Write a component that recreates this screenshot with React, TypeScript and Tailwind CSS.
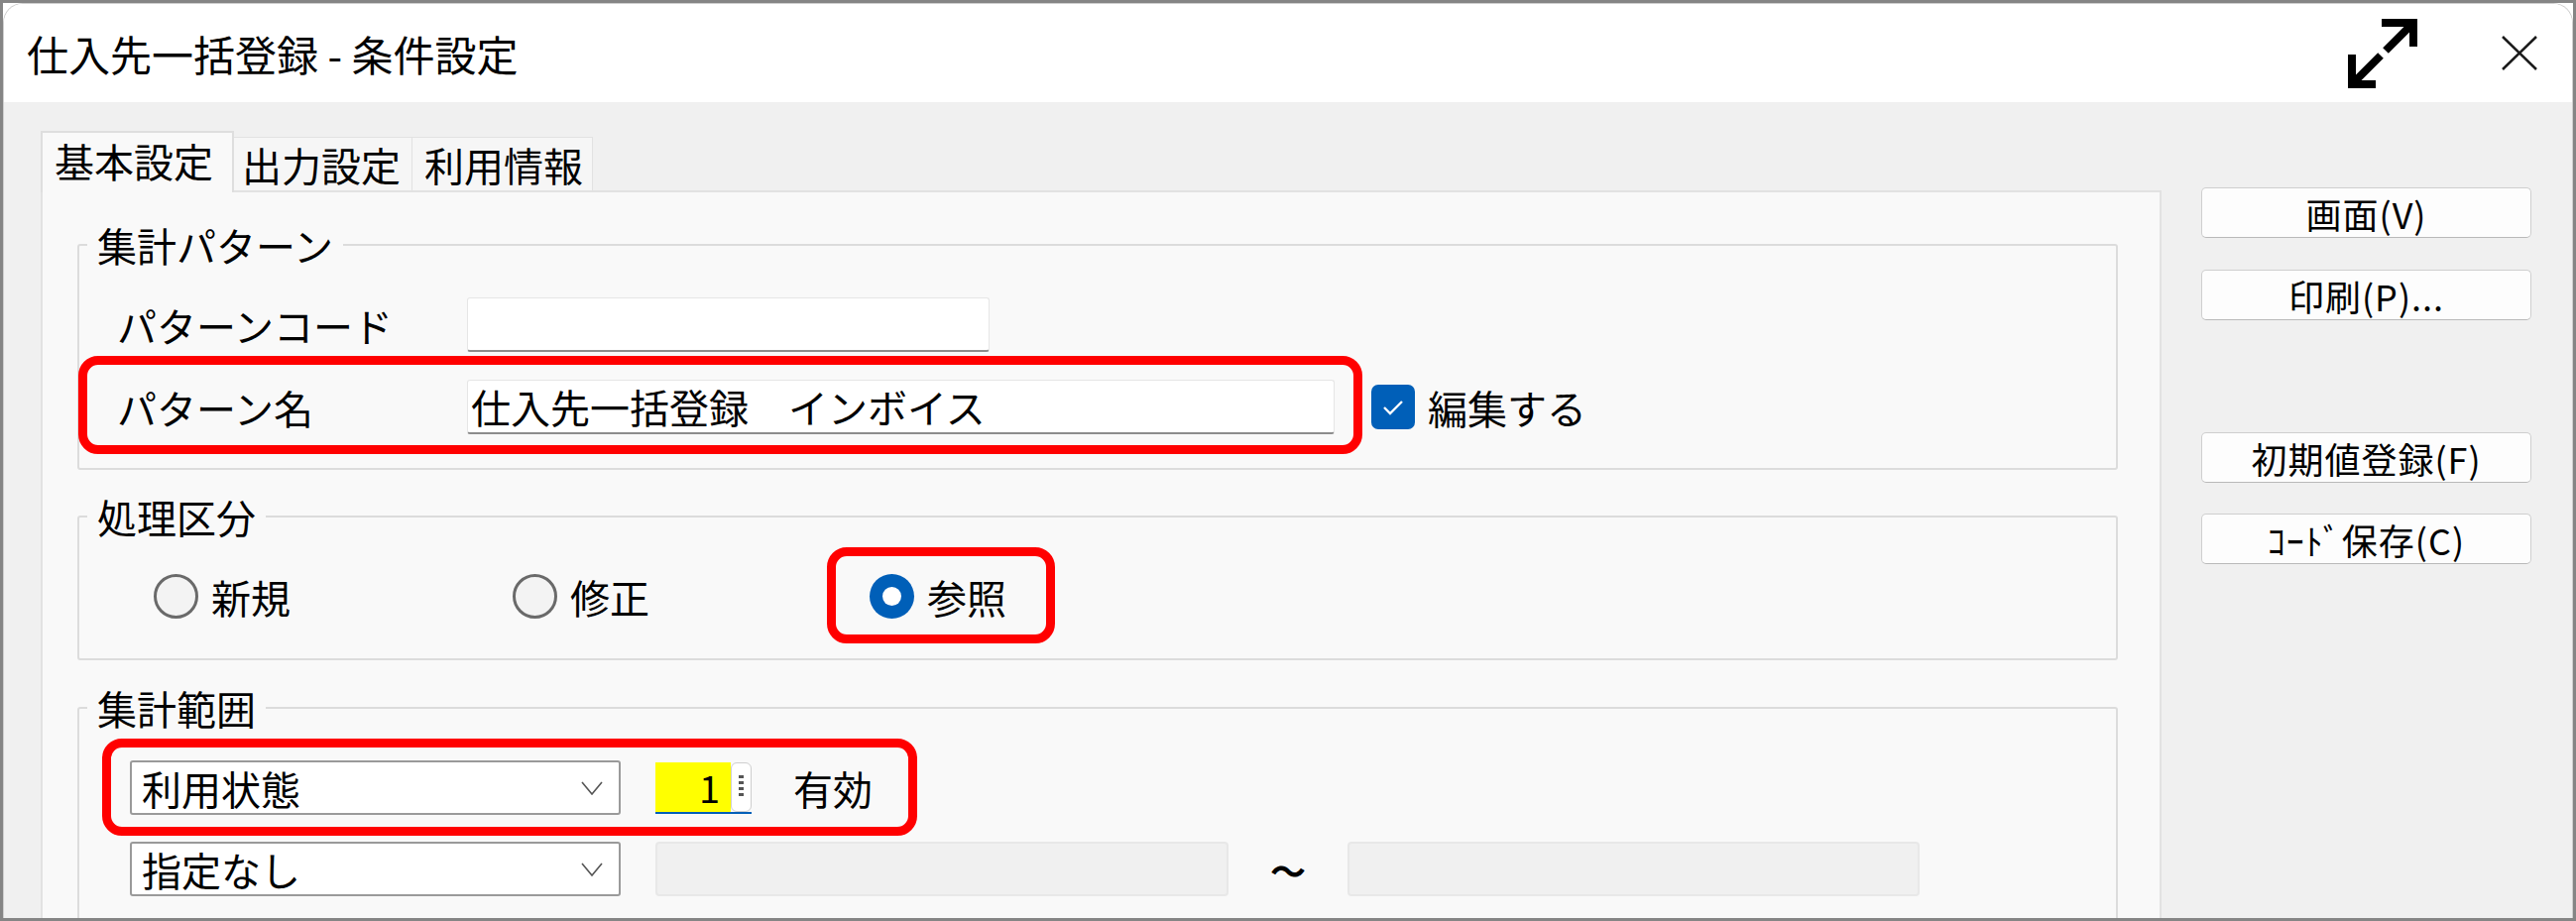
import React from 'react';

const Chevron = () => (
  <svg width="22" height="14" viewBox="0 0 22 14" className="shrink-0">
    <polyline points="1,1 11,13 21,1" fill="none" stroke="#555" strokeWidth="1.6" />
  </svg>
);

const Select = ({ label }: { label: string }) => (
  <div className="w-[495px] h-[55px] bg-white border-2 border-[#9a9a9a] rounded-[3px] flex items-center justify-between pl-[10px] pr-[16px]">
    <span className="text-[40px] leading-none">{label}</span>
    <Chevron />
  </div>
);

const Radio = ({ label, checked }: { label: string; checked?: boolean }) => (
  <div className="flex items-center gap-[13px]">
    {checked ? (
      <div className="w-[45px] h-[45px] rounded-full bg-[#005fb8] flex items-center justify-center">
        <div className="w-[19px] h-[19px] rounded-full bg-white" />
      </div>
    ) : (
      <div className="w-[45px] h-[45px] rounded-full bg-[#f3f3f3] border-[3px] border-[#6a6a6a]" />
    )}
    <span className="text-[40px] leading-none">{label}</span>
  </div>
);

// red annotation frame
const Mark = ({ className }: { className: string }) => (
  <div className={`absolute border-[9px] border-[#ff0000] rounded-[20px] pointer-events-none ${className}`} />
);

const Group = ({ title, children, className = '' }: { title: string; children: React.ReactNode; className?: string }) => (
  <fieldset className={`border-2 border-[#dcdcdc] rounded-[3px] ${className}`}>
    <legend className="ml-[8px] px-[10px] text-[40px] leading-[48px]">{title}</legend>
    {children}
  </fieldset>
);

const SideButton = ({ label, className = '' }: { label: string; className?: string }) => (
  <div className={`w-[333px] h-[51px] bg-[#fdfdfd] border border-[#cfcfcf] border-b-[#b9b9b9] rounded-[5px] flex items-center justify-center text-[36px] leading-none tracking-[1px] ${className}`}>
    {label}
  </div>
);

export default function App() {
  return (
    <div className="w-[2598px] h-[929px] bg-white border-[3px] border-[#858585] overflow-hidden text-black font-['Noto_Sans_CJK_JP','Noto_Sans',sans-serif]">
      <div className="h-full flex flex-col rounded-t-[20px] border-t border-x border-[#cfcfcf] overflow-hidden">
        {/* title bar */}
        <div className="h-[99px] shrink-0 bg-white flex items-center pl-[23px] pr-[35px]">
          <span className="text-[42px] leading-none">仕入先一括登録 - 条件設定</span>
          <div className="ml-auto flex items-center">
            <svg width="72" height="70" viewBox="0 0 72 70">
              <g fill="none" stroke="#000" strokeWidth="8" strokeLinejoin="miter">
                <path d="M34 4 H66 V28" />
                <path d="M66 4 L38 32" />
                <path d="M33 37 L4 66" />
                <path d="M4 36 V66 H28" />
              </g>
            </svg>
            <svg width="36" height="35" viewBox="0 0 36 35" className="ml-[83px]">
              <g stroke="#1a1a1a" strokeWidth="2.6">
                <line x1="1" y1="1" x2="35" y2="34" />
                <line x1="35" y1="1" x2="1" y2="34" />
              </g>
            </svg>
          </div>
        </div>

        {/* body */}
        <div className="flex-1 min-h-0 flex bg-[#f0f0f0]">
          <div className="w-[2176px] pl-[37px] pt-[29px] flex flex-col min-h-0">
            {/* tabs */}
            <div className="flex items-end h-[60px] shrink-0">
              <div className="relative z-10 w-[195px] h-[62px] -mb-[2px] bg-[#f9f9f9] border-2 border-b-0 border-[#dedede] flex items-center pl-[12px] pb-[4px]">
                <span className="text-[40px] leading-none">基本設定</span>
              </div>
              <div className="w-[180px] h-[54px] bg-[#f6f6f6] border border-b-0 border-l-0 border-[#e2e2e2] flex items-center pl-[8px]">
                <span className="text-[40px] leading-none">出力設定</span>
              </div>
              <div className="w-[182px] h-[54px] bg-[#f6f6f6] border border-b-0 border-l-0 border-[#e2e2e2] flex items-center pl-[12px]">
                <span className="text-[40px] leading-none">利用情報</span>
              </div>
            </div>

            {/* panel */}
            <div className="flex-1 min-h-0 overflow-hidden bg-[#f9f9f9] border-2 border-b-0 border-[#e2e2e2] pl-[35px] pr-[42px] pt-[29px]">
              <Group title="集計パターン">
                <div className="pl-[38px] pt-[29px] pb-[34px] flex flex-col gap-[28px]">
                  <div className="flex items-center h-[55px]">
                    <span className="w-[353px] text-[40px] leading-none">パターンコード</span>
                    <div className="w-[527px] h-[55px] bg-white border border-[#e6e6e6] border-b-2 border-b-[#8c8c8c] rounded-[3px]" />
                  </div>
                  <div className="relative flex items-center h-[55px]">
                    <span className="w-[353px] text-[40px] leading-none">パターン名</span>
                    <div className="w-[875px] h-[55px] bg-white border border-[#e6e6e6] border-b-2 border-b-[#8c8c8c] rounded-[3px] flex items-center pl-[3px]">
                      <span className="text-[40px] leading-none">仕入先一括登録　インボイス</span>
                    </div>
                    <div className="ml-[37px] w-[44px] h-[45px] rounded-[7px] bg-[#005fb8] flex items-center justify-center">
                      <svg width="24" height="20" viewBox="0 0 24 20">
                        <polyline points="3,10 9,16 21,4" fill="none" stroke="#fff" strokeWidth="2.4" />
                      </svg>
                    </div>
                    <span className="ml-[13px] text-[40px] leading-none">編集する</span>
                    <Mark className="left-[-39px] top-[-24px] w-[1295px] h-[99px]" />
                  </div>
                </div>
              </Group>

              <Group title="処理区分" className="mt-[23px]">
                <div className="pl-[75px] pt-[34px] pb-[40px] flex items-center h-[119px]">
                  <div className="w-[362px]"><Radio label="新規" /></div>
                  <div className="w-[360px]"><Radio label="修正" /></div>
                  <div className="relative">
                    <Radio label="参照" checked />
                    <Mark className="left-[-43px] top-[-27px] w-[230px] h-[97px]" />
                  </div>
                </div>
              </Group>

              <Group title="集計範囲" className="mt-[24px]">
                <div className="pl-[51px] pt-[29px] pb-[40px] flex flex-col gap-[27px]">
                  <div className="relative flex items-center h-[55px]">
                    <Select label="利用状態" />
                    <div className="ml-[35px] w-[97px] h-[52px] flex border-b-2 border-[#005fb8]">
                      <div className="w-[76px] h-full bg-[#ffff00] flex items-center justify-end pr-[11px]">
                        <span className="text-[38px] leading-none">1</span>
                      </div>
                      <div className="w-[21px] h-full bg-white border border-[#cfcfcf] rounded-[6px] flex items-center justify-center">
                        <svg width="5" height="26" viewBox="0 0 5 26">
                          <g fill="#555">
                            <rect x="0" y="1" width="5" height="3" />
                            <rect x="0" y="7" width="5" height="3" />
                            <rect x="0" y="13" width="5" height="3" />
                            <rect x="0" y="19" width="5" height="3" />
                          </g>
                        </svg>
                      </div>
                    </div>
                    <span className="ml-[42px] text-[40px] leading-none">有効</span>
                    <Mark className="left-[-28px] top-[-22px] w-[822px] h-[98px]" />
                  </div>
                  <div className="flex items-center h-[55px]">
                    <Select label="指定なし" />
                    <div className="ml-[35px] w-[578px] h-[55px] bg-[#f0f0f0] border-2 border-[#e8e8e8] rounded-[4px]" />
                    <div className="w-[120px] flex justify-center">
                      <span className="text-[36px] leading-none font-bold">～</span>
                    </div>
                    <div className="w-[577px] h-[55px] bg-[#f0f0f0] border-2 border-[#e8e8e8] rounded-[4px]" />
                  </div>
                </div>
              </Group>
            </div>
          </div>

          {/* side buttons */}
          <div className="flex-1 pl-[40px] pt-[86px] flex flex-col">
            <SideButton label="画面(V)" />
            <SideButton label="印刷(P)..." className="mt-[32px]" />
            <SideButton label="初期値登録(F)" className="mt-[113px]" />
            <SideButton label="ｺｰﾄﾞ保存(C)" className="mt-[31px]" />
          </div>
        </div>
      </div>
    </div>
  );
}
